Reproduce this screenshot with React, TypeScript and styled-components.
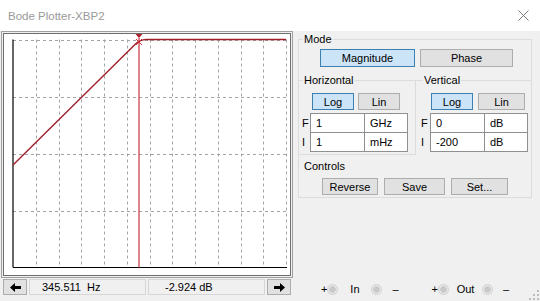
import React from 'react'
import styled, { createGlobalStyle } from 'styled-components'

const GlobalStyle = createGlobalStyle`
  html,
  body {
    margin: 0;
    padding: 0;
    background: #f0f0f0;
  }

  body {
    font-family: 'Liberation Sans', Arial, sans-serif;
    font-size: 11px;
    color: #000;
  }
`

const Window = styled.div`
  position: relative;
  width: 540px;
  height: 301px;
  display: flex;
  flex-direction: column;
  overflow: hidden;
  background: #f0f0f0;
`

const TitleBar = styled.div`
  flex: none;
  height: 31px;
  padding: 0 11px 0 8px;
  display: flex;
  align-items: center;
  justify-content: space-between;
  box-sizing: border-box;
  background: #fff;
`

const Title = styled.span`
  font-size: 11.5px;
  color: #999;
`

const Body = styled.div`
  flex: 1;
  min-height: 0;
  display: flex;
`

const PlotColumn = styled.div`
  flex: none;
  width: 294px;
  display: flex;
  flex-direction: column;
`

const PlotFrame = styled.div`
  margin-left: 1px;
  width: 292px;
  height: 247px;
  padding: 1px;
  box-sizing: border-box;
  border: 1px solid #a0a0a0;
`

const PlotArea = styled.div`
  height: 100%;
  box-sizing: border-box;
  border: 1px solid #6e6e6e;
  background: #fff;

  svg {
    display: block;
  }
`

const StatusRow = styled.div`
  margin-top: 1px;
  padding-left: 3px;
  height: 16px;
  display: flex;
  gap: 2px;
`

const ArrowButton = styled.div`
  width: 24px;
  box-sizing: border-box;
  display: flex;
  align-items: center;
  justify-content: center;
  background: #e1e1e1;
  border: 1px solid #adadad;
`

const ReadOut = styled.div<{ $indent: number }>`
  width: 117px;
  box-sizing: border-box;
  padding-left: ${p => p.$indent}px;
  display: flex;
  align-items: center;
  white-space: pre;
  border: 1px solid #d7d7d7;
`

const SideColumn = styled.div`
  flex: 1;
  padding-left: 4px;
  display: flex;
  flex-direction: column;
`

const Panel = styled.div`
  margin-top: 8px;
  width: 234px;
  height: 159px;
  box-sizing: border-box;
  border: 1px solid #dcdcdc;
  display: flex;
  flex-direction: column;
`

const Caption = styled.div<{ $indent: number; $top?: number }>`
  align-self: flex-start;
  height: 16px;
  line-height: 16px;
  padding: 0 1px;
  margin: ${p => p.$top ?? -9}px 0 0 ${p => p.$indent}px;
  background: #f0f0f0;
`

const ButtonRow = styled.div<{ $indent: number; $gap: number; $top: number }>`
  margin-top: ${p => p.$top}px;
  padding-left: ${p => p.$indent}px;
  display: flex;
  gap: ${p => p.$gap}px;
`

const Button = styled.div<{ $w: number; $h?: number; $active?: boolean }>`
  width: ${p => p.$w}px;
  height: ${p => p.$h ?? 17}px;
  box-sizing: border-box;
  display: flex;
  align-items: center;
  justify-content: center;
  background: ${p => (p.$active ? '#cce4f7' : '#e1e1e1')};
  border: 1px solid ${p => (p.$active ? '#3c7fb1' : '#adadad')};
`

const AxesRow = styled.div`
  margin-top: 13px;
  display: flex;
`

const HorizontalBox = styled.div`
  width: 117px;
  box-sizing: border-box;
  padding-bottom: 2px;
  border: 1px solid #dcdcdc;
  border-left: none;
  display: flex;
  flex-direction: column;
`

const VerticalBox = styled.div`
  flex: 1;
  border-top: 1px solid #dcdcdc;
  display: flex;
  flex-direction: column;
`

const InputRow = styled.div<{ $indent: number; $labelW: number; $top: number }>`
  margin-top: ${p => p.$top}px;
  padding-left: ${p => p.$indent}px;
  height: 20px;
  display: flex;

  & > span {
    width: ${p => p.$labelW}px;
    display: flex;
    align-items: center;
  }
`

const Input = styled.div<{ $w: number; $joined?: boolean }>`
  width: ${p => p.$w}px;
  margin-left: ${p => (p.$joined ? -1 : 0)}px;
  padding-left: 5px;
  box-sizing: border-box;
  display: flex;
  align-items: center;
  background: #fff;
  border: 1px solid #8f8f8f;
`

const PortsRow = styled.div`
  margin-top: auto;
  margin-bottom: 4px;
  padding-left: 23px;
  height: 16px;
  display: flex;
  align-items: center;
`

const PortGroup = styled.div<{ $gap?: number }>`
  margin-left: ${p => p.$gap ?? 0}px;
  display: flex;
  align-items: center;
`

const Sign = styled.span<{ $gap?: number }>`
  margin-left: ${p => p.$gap ?? 0}px;
`

const Terminal = styled.span`
  width: 11px;
  height: 11px;
  box-sizing: border-box;
  border-radius: 50%;
  border: 1px solid #d0d0d0;
  background: radial-gradient(circle, #c9c9c9 0 3px, #e8e8e8 3.5px);
`

const PortLabel = styled.span`
  width: 33px;
  text-align: center;
`

const Grip = styled.svg`
  position: absolute;
  right: 1px;
  bottom: 1px;
`

const CloseIcon = () => (
  <svg width="11" height="11" viewBox="0 0 11 11">
    <path d="M0.5 0.5 L10.5 10.5 M10.5 0.5 L0.5 10.5" stroke="#7a7a7a" strokeWidth="1" fill="none" />
  </svg>
)

const Arrow = ({ dir }: { dir: 'left' | 'right' }) => (
  <svg width="11" height="9" viewBox="0 0 11 9">
    <path
      d="M0 4.5 L5 0 L5 3 L11 3 L11 6 L5 6 L5 9 Z"
      fill="#000"
      transform={dir === 'right' ? 'translate(11 0) scale(-1 1)' : undefined}
    />
  </svg>
)

// plot area is 286 x 241, axes run from x 9..282 and y 5.5..233.5
const left = 9
const right = 282
const top = 5.5
const bottom = 233.5
const cols = 12
const rows = 4
const cursorX = 135

const Chart = () => {
  const dx = (right - left) / cols
  const dy = (bottom - top) / rows

  return (
    <svg width="286" height="241" viewBox="0 0 286 241">
      <g stroke="#a3a3a3" strokeWidth="1" strokeDasharray="3 3" fill="none">
        {Array.from({ length: cols }, (_, i) => {
          const x = Math.round(left + dx * (i + 1)) + 0.5
          return <line key={`v${i}`} x1={x} y1={top} x2={x} y2={bottom} />
        })}
        {Array.from({ length: rows }, (_, i) => {
          const y = Math.round(top + dy * i) + 0.5
          return <line key={`h${i}`} x1={left} y1={y} x2={right} y2={y} />
        })}
      </g>
      <g stroke="#000" strokeWidth="1.2">
        <line x1={left} y1={top} x2={left} y2={bottom} />
        <line x1={left} y1={bottom} x2={right + 1} y2={bottom} />
      </g>
      <path
        d={`M${left} 131 L132 9.5 Q136 5.8 142 5.5 L${right} 5.5`}
        stroke="#a0202a"
        strokeWidth="1.4"
        fill="none"
      />
      <line x1={cursorX} y1={4} x2={cursorX} y2={bottom} stroke="#c8323c" strokeWidth="1.2" />
      <path d={`M${cursorX - 3.5} 0 L${cursorX + 3.5} 0 L${cursorX} 4 Z`} fill="#b0202a" />
      <path
        d={`M${cursorX - 3} 5 L${cursorX + 3} 11 M${cursorX + 3} 5 L${cursorX - 3} 11`}
        stroke="#c8323c"
        strokeWidth="1"
      />
    </svg>
  )
}

const ResizeGrip = () => (
  <Grip width="10" height="10" viewBox="0 0 10 10">
    {[
      [8, 0],
      [8, 4],
      [4, 4],
      [8, 8],
      [4, 8],
      [0, 8],
    ].map(([x, y]) => (
      <rect key={`${x}-${y}`} x={x} y={y} width="2" height="2" fill="#bcbcbc" />
    ))}
  </Grip>
)

const Port = ({ name, gap }: { name: string; gap?: number }) => (
  <PortGroup $gap={gap}>
    <Sign>+</Sign>
    <Terminal />
    <PortLabel>{name}</PortLabel>
    <Terminal />
    <Sign $gap={10}>–</Sign>
  </PortGroup>
)

export default function App() {
  return (
    <>
      <GlobalStyle />
      <Window>
        <TitleBar>
          <Title>Bode Plotter-XBP2</Title>
          <CloseIcon />
        </TitleBar>
        <Body>
          <PlotColumn>
            <PlotFrame>
              <PlotArea>
                <Chart />
              </PlotArea>
            </PlotFrame>
            <StatusRow>
              <ArrowButton>
                <Arrow dir="left" />
              </ArrowButton>
              <ReadOut $indent={12}>{'345.511  Hz'}</ReadOut>
              <ReadOut $indent={16}>-2.924 dB</ReadOut>
              <ArrowButton>
                <Arrow dir="right" />
              </ArrowButton>
            </StatusRow>
          </PlotColumn>
          <SideColumn>
            <Panel>
              <Caption $indent={4}>Mode</Caption>
              <ButtonRow $top={2} $indent={21} $gap={5}>
                <Button $w={95} $h={18} $active>
                  Magnitude
                </Button>
                <Button $w={93} $h={18}>
                  Phase
                </Button>
              </ButtonRow>
              <AxesRow>
                <HorizontalBox>
                  <Caption $indent={4}>Horizontal</Caption>
                  <ButtonRow $top={5} $indent={13} $gap={4}>
                    <Button $w={42} $active>
                      Log
                    </Button>
                    <Button $w={42}>Lin</Button>
                  </ButtonRow>
                  <InputRow $top={3} $indent={3} $labelW={8}>
                    <span>F</span>
                    <Input $w={55}>1</Input>
                    <Input $w={44} $joined>
                      GHz
                    </Input>
                  </InputRow>
                  <InputRow $top={-1} $indent={3} $labelW={8}>
                    <span>I</span>
                    <Input $w={55}>1</Input>
                    <Input $w={44} $joined>
                      mHz
                    </Input>
                  </InputRow>
                </HorizontalBox>
                <VerticalBox>
                  <Caption $indent={7}>Vertical</Caption>
                  <ButtonRow $top={5} $indent={15} $gap={5}>
                    <Button $w={42} $active>
                      Log
                    </Button>
                    <Button $w={47}>Lin</Button>
                  </ButtonRow>
                  <InputRow $top={3} $indent={5} $labelW={9}>
                    <span>F</span>
                    <Input $w={55}>0</Input>
                    <Input $w={44} $joined>
                      dB
                    </Input>
                  </InputRow>
                  <InputRow $top={-1} $indent={5} $labelW={9}>
                    <span>I</span>
                    <Input $w={55}>-200</Input>
                    <Input $w={44} $joined>
                      dB
                    </Input>
                  </InputRow>
                </VerticalBox>
              </AxesRow>
              <Caption $indent={4} $top={3}>
                Controls
              </Caption>
              <ButtonRow $top={4} $indent={23} $gap={6}>
                <Button $w={56}>Reverse</Button>
                <Button $w={61}>Save</Button>
                <Button $w={57}>Set...</Button>
              </ButtonRow>
            </Panel>
            <PortsRow>
              <Port name="In" />
              <Port name="Out" gap={33} />
            </PortsRow>
          </SideColumn>
        </Body>
        <ResizeGrip />
      </Window>
    </>
  )
}
